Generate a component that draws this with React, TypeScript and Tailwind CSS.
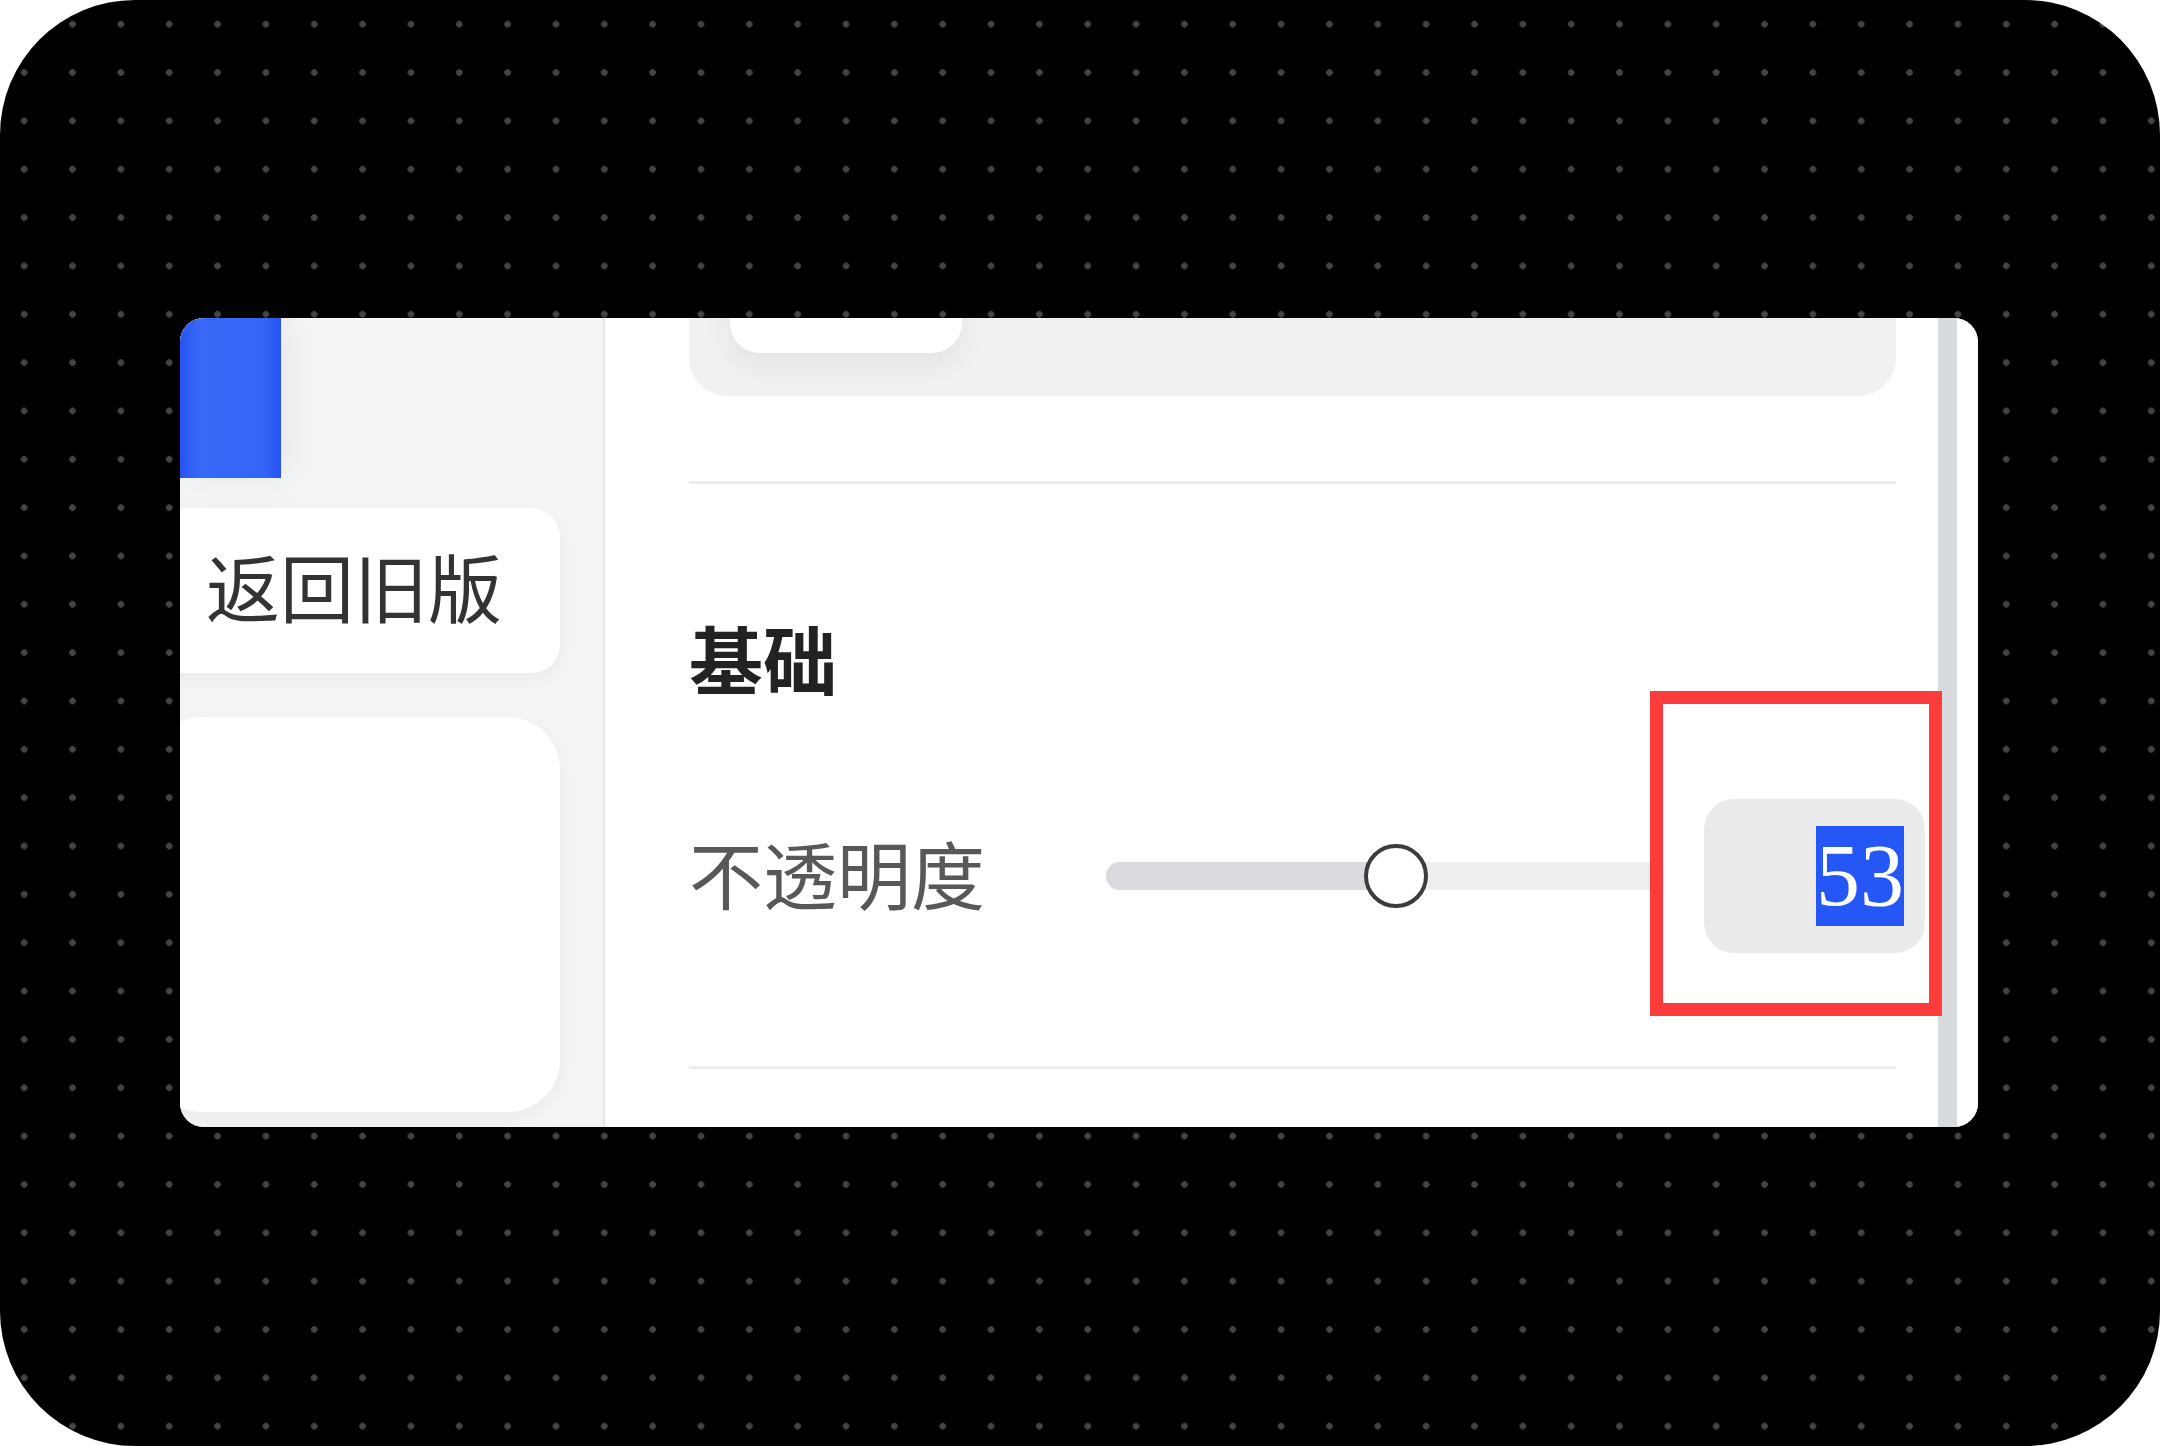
import React from 'react';

const cjk = "font-['Noto_Sans_CJK_SC','Noto_Sans',sans-serif]";

function Sidebar() {
  return (
    <aside className="w-[425px] shrink-0 bg-[#f4f5f7] border-r-2 border-[#e4e6e9] flex flex-col">
      {/* Logo block */}
      <div className="w-[101px] h-[160px] shrink-0 bg-[linear-gradient(90deg,#2553f3_0%,#3868f6_18%,#3565f5_82%,#2552f3_100%)] shadow-[10px_0_40px_rgba(0,0,0,0.06)]" />

      {/* Back to old version */}
      <div className="mt-[30px] ml-[-30px] w-[410px] h-[165px] shrink-0 rounded-[28px] bg-white shadow-[0_6px_24px_rgba(0,0,0,0.05)] flex items-center pl-[56px] pb-[12px]">
        <span className={`${cjk} text-[74px] leading-none text-[#333]`}>返回旧版</span>
      </div>

      {/* Empty card */}
      <div className="mt-[44px] ml-[-30px] w-[410px] h-[395px] shrink-0 rounded-[52px] bg-white shadow-[0_6px_24px_rgba(0,0,0,0.05)]" />
    </aside>
  );
}

function OpacityRow({ value }: { value: number }) {
  const fill = 290;
  return (
    <div className="relative mt-[105px] mr-[-29px] h-[154px] shrink-0 flex items-center">
      <div className={`${cjk} w-[417px] shrink-0 pb-[8px] text-[74px] leading-none text-[#585858]`}>不透明度</div>

      {/* Slider */}
      <div className="relative w-[544px] h-[28px] shrink-0 rounded-l-full bg-[#eceef0]">
        <div className="h-full rounded-l-full bg-[#d9dbde]" style={{ width: fill }} />
        <div
          className="absolute top-1/2 -translate-y-1/2 w-[64px] h-[64px] rounded-full border-4 border-[#3c3c3c] bg-white"
          style={{ left: fill - 32 }}
        />
      </div>

      {/* Number input */}
      <div className="ml-[54px] w-[221px] h-[154px] shrink-0 rounded-[30px] bg-[#ebebeb] flex items-center justify-end pr-[21px]">
        <span className="font-['Liberation_Serif',serif] text-[88px] leading-[100px] bg-[#2457f5] text-white">
          {value}
        </span>
      </div>

      {/* Annotation box */}
      <div className="absolute left-[961px] top-[-108px] w-[292px] h-[325px] border-[13px] border-[#fc3b3b]" />
    </div>
  );
}

export default function App() {
  return (
    <div className="w-[2160px] h-[1446px] bg-white">
      <div className="w-full h-full rounded-[135px] bg-black bg-[radial-gradient(circle,#444_3px,transparent_3.6px)] bg-[length:48.35px_48.35px] pl-[180px] pt-[318px]">
        <div className="w-[1798px] h-[809px] rounded-[24px] overflow-hidden bg-white flex">
          <Sidebar />

          <main className="flex-1 flex">
            <div className="flex-1 pl-[84px] pr-[42px] flex flex-col">
              {/* Top panel (scrolled) */}
              <div className="mt-[-100px] h-[178px] shrink-0 rounded-b-[38px] bg-[#f0f1f3] flex items-end pl-[41px] pb-[43px]">
                <div className="w-[232px] h-[120px] rounded-[30px] bg-white shadow-[0_12px_30px_rgba(0,0,0,0.06)]" />
              </div>

              <div className="mt-[85px] h-[3px] shrink-0 bg-[#ebecee]" />

              <h2 className={`${cjk} mt-[136px] text-[74px] leading-none font-bold text-[#222]`}>基础</h2>

              <OpacityRow value={53} />

              <div className="mt-[113px] h-[3px] shrink-0 bg-[#eeeeee]" />
            </div>

            {/* Scrollbar */}
            <div className="w-[19px] shrink-0 bg-[#d8dbde]" />
            <div className="w-[21px] shrink-0 bg-white" />
          </main>
        </div>
      </div>
    </div>
  );
}
